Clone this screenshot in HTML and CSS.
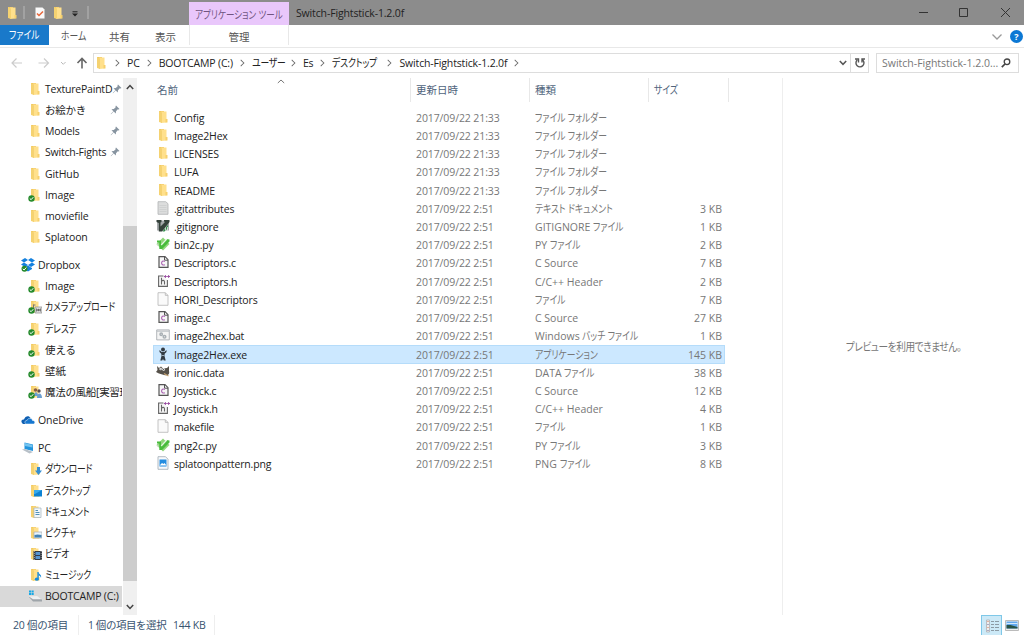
FILE: index.html
```
<!DOCTYPE html>
<html lang="ja">
<head>
    <meta charset="UTF-8">
    <title>Switch-Fightstick-1.2.0f</title>
    <link rel="stylesheet" href="styles.css">
</head>
<body>
    <!-- Icons -->
    <svg class="defs" width="0" height="0">
        <symbol id="folder" viewBox="0 0 14 14">
            <path d="M3 1h5v11H3z" fill="#f0c75e"/>
            <path d="M5 1.500h5.500v11L5 13z" fill="#ffe08c"/>
            <path d="M3 1l3 1.500V13l-3-1z" fill="#f5d271"/>
            <path d="M9.500 9h2v3.500h-2z" fill="#f7d06c"/>
        </symbol>
        <symbol id="check" viewBox="0 0 14 14">
            <circle cx="3.500" cy="10.500" r="3.200" fill="#258a2c"/>
            <path d="M1.800 10.500l1.300 1.200 2.200-2.500" fill="none" stroke="#fff" stroke-width="1"/>
        </symbol>
        <symbol id="synced" viewBox="0 0 14 14"><use href="#folder"/><use href="#check"/></symbol>
        <symbol id="camera" viewBox="0 0 14 14">
            <use href="#folder"/>
            <path d="M7 7h7v6H7z" fill="#e2e2e2" stroke="#888" stroke-width=".7"/>
            <path d="M5.500 4.500v5M5.500 5h2M8.500 8.500v3M12.500 8.500v3" fill="none" stroke="#777"/>
            <circle cx="10.500" cy="10" r="1.300" fill="#666"/>
            <use href="#check"/>
        </symbol>
        <symbol id="people" viewBox="0 0 14 14">
            <use href="#folder"/>
            <circle cx="7.500" cy="5" r="1.800" fill="#8b6048"/><circle cx="11" cy="6" r="1.700" fill="#5d4c48"/>
            <path d="M6 11c0-5 4-5 4 0zM9 13c0-6 5-6 5 0z" fill="#6c9fd1"/>
            <use href="#check"/>
        </symbol>
        <symbol id="dropbox" viewBox="0 0 14 14">
            <path d="M4 0l3 2-4 2.500L0 2.400zM10 0l4 2.400-3 2.100L7 2zM0 6.500l3-2 4 2.500-3 2zM14 6.500l-3-2L7 7l3 2zM3 10l1-.500L7 7.500l3 2 1 .500v1L7 13.500 3 11z" fill="#1481de"/>
            <circle cx="3.500" cy="10.800" r="3" fill="#258a2c"/>
            <path d="M1.800 10.800l1.300 1.200 2.200-2.500" fill="none" stroke="#fff"/>
        </symbol>
        <symbol id="onedrive" viewBox="0 0 14 14">
            <path d="M1 10c-1.500-2 0-4 2-3.500C4 3 8 2 9.500 5L5 11H2z" fill="#0f5fb2"/>
            <path d="M5 11c-2-1-1-4 1-3.500 1-3 5-3 5.500 0 2-.300 3.300 2 1.500 3.500z" fill="#1677cf" stroke="#fff" stroke-width=".5"/>
        </symbol>
        <symbol id="pc" viewBox="0 0 14 14">
            <path d="M3.500 1.500l8.500 2v6.500l-8.500-2z" fill="#2294dd"/>
            <path d="M4 2l7.500 2v2.500L4 5z" fill="#73c3ef"/>
            <path d="M1 8.500l3-.500 8 3-3.500 1.500z" fill="#b8c0c8"/>
        </symbol>
        <symbol id="download" viewBox="0 0 14 14"><use href="#folder"/><path d="M9 5h3v3.500h2L10.500 13 7 8.500h2z" fill="#368fd3"/></symbol>
        <symbol id="desktop" viewBox="0 0 14 14"><use href="#folder"/><path d="M6 6h8.500v6.500H6z" fill="#0c82d3"/><path d="M6 6h8L7 10H6z" fill="#36a9ed"/></symbol>
        <symbol id="document" viewBox="0 0 14 14"><use href="#folder"/><path d="M6 3h7v9.500H6z" fill="#f2f7fa" stroke="#a3b2bd" stroke-width=".7"/><path d="M7.500 5.500H10M7.500 7.500h4M7.500 9.500h4" stroke="#5191bb"/></symbol>
        <symbol id="picture" viewBox="0 0 14 14"><use href="#folder"/><path d="M6 6h8v6H6z" fill="#e9f5fd" stroke="#aaa" stroke-width=".7"/><path d="M6.500 9l3-.500 4 .500v2.500h-7z" fill="#4282b5"/></symbol>
        <symbol id="video" viewBox="0 0 14 14"><use href="#folder"/><path d="M5.500 4H14v9H5.500z" fill="#353a43"/><path d="M7.500 5H12v3H7.500zM7.500 9H12v3H7.500z" fill="#5794d0"/><path d="M6.400 4v9M13.200 4v9" stroke="#ddd" stroke-width=".6" stroke-dasharray="1 1"/></symbol>
        <symbol id="music" viewBox="0 0 14 14"><use href="#folder"/><path d="M10 4c.500 2 4 2.500 3 6-.300-2-1.500-2-2-2.500V11" fill="#168bdd"/><path d="M10 4v7" stroke="#168bdd" stroke-width="1.300"/><ellipse cx="8.800" cy="11.200" rx="2" ry="1.600" fill="#168bdd"/></symbol>
        <symbol id="drive" viewBox="0 0 14 14">
            <path d="M1 1.500h2v2H1zM3.500 1.500h2.200v2H3.500zM1 4h2v2H1zM3.500 4h2.200v2H3.500z" fill="#16a8e5"/>
            <path d="M1 8h9l4 2.500v2H5z" fill="#9fa5aa"/><path d="M1 7.500l8-.500 5 3.300H5z" fill="#eef0f1"/>
        </symbol>
        <symbol id="pin" viewBox="0 0 10 10"><path d="M6 .500L9.500 4l-1 .500-.700-.200L6 6.200 5.800 8.500 3.700 6.500 1 9.300.700 9l2.700-2.800L1.500 4.200l2.300-.200 1.900-1.800-.200-.900z" fill="#8794a0"/></symbol>
        <symbol id="text" viewBox="0 0 14 14"><path d="M2 .700h7.700l2.300 2v10.600H2z" fill="#dcdddd" stroke="#b0b2b4" stroke-width=".8"/><path d="M3.500 4.500h7M3.500 6.500h7M3.500 8.500h7M3.500 10.500h7" stroke="#c9cbcc" stroke-width=".7"/></symbol>
        <symbol id="blank" viewBox="0 0 14 14"><path d="M2 .700h7.300L12 3.400v9.900H2z" fill="#fafafa" stroke="#b5b5b5" stroke-width=".8"/><path d="M9.300.700v2.700H12" fill="none" stroke="#b5b5b5" stroke-width=".8"/></symbol>
        <symbol id="git" viewBox="0 0 14 14">
            <path d="M1 1.500h12v10H1z" fill="#a6aaac"/>
            <path d="M.500 1h5v2l-1 .500v4L9 3 8 2.500V1h5.500v2L6 12.500H2.800V4L.500 3z" fill="#34413a"/>
            <path d="M6.500 12.500L12 6v3l-3.500 3.500z" fill="#2e8e48"/><path d="M9.500 8.500v3M11.500 8v3.500" stroke="#e4e8e5" stroke-width=".8"/>
        </symbol>
        <symbol id="py" viewBox="0 0 14 14">
            <path d="M7 .500L13.500 7 7 13.500.500 7z" fill="#8fd779"/>
            <path d="M1 3.500h4v4L10.500 2l3 .500v2L6 12H3.300V5.500H1z" fill="#48bc3c"/>
            <path d="M5.200 8L10.800 2" stroke="#e5f6df" stroke-width="1.200"/><path d="M.500 7.500l2 2v-3z" fill="#c5d7c0"/>
        </symbol>
        <symbol id="c" viewBox="0 0 14 14">
            <path d="M3 1.700h6l3 3v7.600H3z" fill="#f6f6f6" stroke="#555" stroke-width="1.200"/><path d="M8.500 1.500v3.700H12" fill="none" stroke="#555"/>
            <path d="M8.900 6.400C6.800 5.400 5.600 6.600 5.600 8s1.300 2.600 3.300 1.700" fill="none" stroke="#a85fb0" stroke-width="1.100"/>
        </symbol>
        <symbol id="h" viewBox="0 0 14 14">
            <path d="M7.500 2H2.600v10.400h8.800V6" fill="#f6f6f6" stroke="#666" stroke-width="1.100"/>
            <path d="M5.500 3.800v6.700M5.500 7.300c1-1.500 3-1.200 3 .500v2.700" fill="none" stroke="#666" stroke-width="1.100"/>
            <path d="M8 2.500h2.800M9.400 1.100v2.800M11.200 2.500H14M12.600 1.100v2.800" stroke="#9a4fa2"/>
        </symbol>
        <symbol id="bat" viewBox="0 0 14 14">
            <path d="M.700 1.900h12.600v10H.700z" fill="#f4f4f4" stroke="#9fa5aa" stroke-width=".8"/><path d="M1 3.200h12" stroke="#b9bec2"/>
            <circle cx="5.200" cy="6.300" r="1.200" fill="none" stroke="#a9b0b5" stroke-width="1.500"/><circle cx="8.500" cy="8.800" r="1.300" fill="none" stroke="#a9b0b5" stroke-width="1.500"/>
        </symbol>
        <symbol id="exe" viewBox="0 0 14 14">
            <circle cx="7" cy="2.500" r="2" fill="#343c43"/><path d="M3.500 3l2.200 2h2.600l2.200-2v2L8.700 6.800 8.500 9l1.200 4.500H7.800L7 12l-.800 1.500H4.300L5.500 9l-.200-2.200L3.500 5z" fill="#343c43"/><path d="M5.500 8.500h3" stroke="#9cabb6"/>
        </symbol>
        <symbol id="gimp" viewBox="0 0 14 14">
            <path d="M1 1l2 2 2-1.500 2 2 4-.500 2-2v5c1 4-2 5-5 4L3 8.500 0 7l1.500-2z" fill="#555049"/>
            <circle cx="4.700" cy="4" r="1.300" fill="#fff"/><circle cx="7.600" cy="4.500" r="1.300" fill="#fff"/><circle cx="5" cy="4.100" r=".5"/><circle cx="7.700" cy="4.600" r=".5"/>
            <path d="M8 8.500l4.500 2.500" stroke="#c5a16f" stroke-width="1.200"/>
        </symbol>
        <symbol id="png" viewBox="0 0 14 14"><path d="M2 .700h7.500L12 3.200v10.100H2z" fill="#f8fafc" stroke="#9faab4" stroke-width=".8"/><path d="M3.500 3.500h7V10h-7z" fill="#258de0"/><path d="M3.500 9.500L6 7l1.500 1 1-1 2 2.500v.5h-7z" fill="#fff"/><path d="M3.500 9.500h7v1h-7z" fill="#258de0"/></symbol>
    </svg>

    <header class="titlebar">
        <div class="quick">
            <svg class="icon"><use href="#folder"/></svg>
            <i class="bar"></i>
            <svg class="prop" viewBox="0 0 10 12"><path d="M.5.500h7l2 2v9h-9z" fill="#fafafa"/><path d="M2 6.500l2 2 4-4" fill="none" stroke="#e8663a" stroke-width="1.500"/></svg>
            <svg class="icon new"><use href="#folder"/></svg>
            <svg class="more" viewBox="0 0 6 6"><path d="M.5.800h5" stroke="#222"/><path d="M0 2.500h6L3 5.500z" fill="#222"/></svg>
            <i class="bar"></i>
        </div>
        <div class="context"><span class="kana">アプリケーション ツール</span></div>
        <div class="caption">Switch-Fightstick-1.2.0f</div>
        <svg class="winbuttons" viewBox="0 0 92 10" fill="none" stroke="#333"><path d="M0 5.500h9M40.500 1.500h8v8h-8zM82 1l9 9M91 1l-9 9"/></svg>
    </header>

    <nav class="ribbon">
        <div class="tab file"><span class="kana">ファイル</span></div>
        <div class="tab home"><span class="kana">ホーム</span></div>
        <div class="tab share">共有</div>
        <div class="tab view">表示</div>
        <div class="tab manage">管理</div>
        <svg class="expand" viewBox="0 0 10 6"><path d="M.5.500L5 5 9.500.500" fill="none" stroke="#999" stroke-width="1.300"/></svg>
        <div class="help">?</div>
    </nav>

    <div class="addressbar">
        <svg class="arrows" viewBox="0 0 78 12" fill="none">
            <path d="M5.500 1.500L1 6l4.500 4.500M1 6h10M33 1.500L37.500 6 33 10.500M37.500 6h-10" stroke="#ccc" stroke-width="1.200"/>
            <path d="M50 5l2.300 2.300L54.600 5" stroke="#bbb"/>
            <path d="M66.500 6L71 1.500 75.500 6M71 2v9.500" stroke="#666" stroke-width="1.600"/>
        </svg>
        <div class="path">
            <svg class="icon"><use href="#folder"/></svg>
            <div class="crumbs">
                <b></b>
                <span>PC</span><span>BOOTCAMP (C:)</span><span class="user"><em class="kana">ユーザー</em></span><span>Es</span><span class="desk"><em class="kana">デスクトップ</em></span><span>Switch-Fightstick-1.2.0f</span>
            </div>
            <svg class="drop" viewBox="0 0 8 6"><path d="M.8 1L4 4.300 7.200 1" fill="none" stroke="#555" stroke-width="1.500"/></svg>
            <div class="refresh"><svg viewBox="0 0 12 12" fill="none" stroke="#555" stroke-width="1.400"><path d="M3.200 3A4 4 0 1 0 8.500 2.800M1 2h3.500v3.500M8 5.500V2h3"/></svg></div>
        </div>
        <div class="search"><span>Switch-Fightstick-1.2.0...</span><svg viewBox="0 0 10 10" fill="none" stroke="#444"><circle cx="6" cy="3.800" r="2.800" stroke-width="1.300"/><path d="M4 6L.8 9.200" stroke-width="1.700"/></svg></div>
    </div>

    <main>
        <aside id="tree"></aside>
        <div class="scroll">
            <svg viewBox="0 0 8 6"><path d="M.8 5L4 1.500 7.200 5" fill="none" stroke="#444" stroke-width="1.500"/></svg>
            <div class="thumb"></div>
            <svg viewBox="0 0 8 6"><path d="M.8 1L4 4.500 7.200 1" fill="none" stroke="#444" stroke-width="1.500"/></svg>
        </div>
        <section class="files">
            <div class="head">
                <div>名前<svg class="sort" viewBox="0 0 8 5"><path d="M.8 4L4 1l3.200 3" fill="none" stroke="#777"/></svg></div>
                <div>更新日時</div>
                <div>種類</div>
                <div><span class="kana">サイズ</span></div>
            </div>
            <div id="rows"></div>
        </section>
        <section class="preview"><span>プレビューを利用できません。</span></section>
    </main>

    <footer>
        <span class="count">20 個の項目</span>
        <span class="selected">1 個の項目を選択</span>
        <span class="bytes">144 KB</span>
        <div class="details"><svg viewBox="0 0 14 14"><path d="M1.500 1h3v12h-3z" fill="#eee" stroke="#aaa" stroke-width=".7"/><path d="M3 2v1M3 8v1" stroke="#d87755"/><path d="M3 5v1M3 11v1" stroke="#669"/><path d="M6 2.500h3M10 2.500h4M6 5.500h3M10 5.500h4M6 8.500h3M10 8.500h4M6 11.500h3M10 11.500h4" stroke="#8c9ba5"/></svg></div>
        <svg class="large" viewBox="0 0 14 11"><path d="M.5.500h13v10H.5z" fill="#eee" stroke="#bbb"/><path d="M1.500 1.500h11v7h-11z" fill="#62a8ef"/><path d="M1.500 5h4l7 2v1.500h-11z" fill="#285346"/><path d="M1.500 3.500h11" stroke="#d3e9fb"/></svg>
    </footer>

    <script>
        // icon, name, level, class
        var tree = [
            ["folder", "TexturePaintD", 1, "pinned"],
            ["folder", "お絵かき", 1, "pinned"],
            ["folder", "Models", 1, "pinned"],
            ["folder", "Switch-Fights", 1, "pinned"],
            ["folder", "GitHub", 1, ""],
            ["synced", "Image", 1, ""],
            ["folder", "moviefile", 1, ""],
            ["folder", "Splatoon", 1, ""],
            ["dropbox", "Dropbox", 0, ""],
            ["synced", "Image", 1, ""],
            ["camera", "カメラアップロード", 1, ""],
            ["synced", "デレステ", 1, ""],
            ["synced", "使える", 1, ""],
            ["synced", "壁紙", 1, ""],
            ["people", "魔法の風船[実習班", 1, "long"],
            ["onedrive", "OneDrive", 0, ""],
            ["pc", "PC", 0, ""],
            ["download", "ダウンロード", 1, ""],
            ["desktop", "デスクトップ", 1, ""],
            ["document", "ドキュメント", 1, ""],
            ["picture", "ピクチャ", 1, ""],
            ["video", "ビデオ", 1, ""],
            ["music", "ミュージック", 1, ""],
            ["drive", "BOOTCAMP (C:)", 1, "current"]
        ];

        var files = [
            ["folder", "Config", "21:33", "ファイル フォルダー", ""],
            ["folder", "Image2Hex", "21:33", "ファイル フォルダー", ""],
            ["folder", "LICENSES", "21:33", "ファイル フォルダー", ""],
            ["folder", "LUFA", "21:33", "ファイル フォルダー", ""],
            ["folder", "README", "21:33", "ファイル フォルダー", ""],
            ["text", ".gitattributes", "2:51", "テキスト ドキュメント", "3 KB"],
            ["git", ".gitignore", "2:51", "GITIGNORE ファイル", "1 KB"],
            ["py", "bin2c.py", "2:51", "PY ファイル", "2 KB"],
            ["c", "Descriptors.c", "2:51", "C Source", "7 KB"],
            ["h", "Descriptors.h", "2:51", "C/C++ Header", "2 KB"],
            ["blank", "HORI_Descriptors", "2:51", "ファイル", "7 KB"],
            ["c", "image.c", "2:51", "C Source", "27 KB"],
            ["bat", "image2hex.bat", "2:51", "Windows バッチ ファイル", "1 KB"],
            ["exe", "Image2Hex.exe", "2:51", "アプリケーション", "145 KB"],
            ["gimp", "ironic.data", "2:51", "DATA ファイル", "38 KB"],
            ["c", "Joystick.c", "2:51", "C Source", "12 KB"],
            ["h", "Joystick.h", "2:51", "C/C++ Header", "4 KB"],
            ["blank", "makefile", "2:51", "ファイル", "1 KB"],
            ["py", "png2c.py", "2:51", "PY ファイル", "3 KB"],
            ["png", "splatoonpattern.png", "2:51", "PNG ファイル", "8 KB"]
        ];

        function icon(name) {
            return '<svg class="icon"><use href="#' + name + '"/></svg>';
        }

        // katakana is set condensed
        function kana(text) {
            return text.replace(/[ァ-ー][ァ-ー ]*/g, '<span class="kana">$&</span>');
        }

        document.getElementById("tree").innerHTML = tree.map(function (t) {
            return '<div class="node level' + t[2] + ' ' + t[3] + '">' + icon(t[0]) +
                '<span class="label">' + kana(t[1]) + '</span>' +
                (t[3] == "pinned" ? '<svg class="pin"><use href="#pin"/></svg>' : '') + '</div>';
        }).join("");

        document.getElementById("rows").innerHTML = files.map(function (f) {
            return '<div class="row' + (f[1] == "Image2Hex.exe" ? ' active' : '') + '">' +
                '<div class="name">' + icon(f[0]) + '<span>' + f[1] + '</span></div>' +
                '<div class="date">2017/09/22 ' + f[2] + '</div><div>' + kana(f[3]) + '</div>' +
                '<div class="size">' + f[4] + '</div></div>';
        }).join("");
    </script>
</body>
</html>
```
FILE: styles.css
```
* {
    box-sizing: border-box;
}

body {
    margin: 0;
    height: 635px;
    overflow: hidden;
    display: flex;
    flex-direction: column;
    background: #fff;
    color: #222;
    font-family: "Open Sans", "Noto Sans CJK JP", sans-serif;
    font-size: 10.5px;
    line-height: 16px;
    white-space: nowrap;
}

svg {
    display: block;
    flex: none;
}

.defs {
    position: absolute;
}

.icon {
    width: 14px;
    height: 14px;
}

.kana {
    display: inline-block;
    font-size: 11px;
    font-style: normal;
    font-feature-settings: "palt";
    transform: scaleX(0.8);
    transform-origin: left;
    white-space: pre;
}

/* Title bar */
.titlebar {
    display: flex;
    height: 25px;
    background: #8c8c8c;
}

.quick {
    width: 189px;
    display: flex;
    align-items: center;
    padding-left: 5px;
}

.bar {
    width: 2px;
    height: 13px;
    margin-left: 4px;
    border: 1px solid #a2a2a2;
}

.prop {
    width: 10px;
    height: 12px;
    margin-left: 10px;
}

.new {
    margin-left: 6px;
}

.more {
    width: 6px;
    height: 6px;
    margin: 2px 5px 0 7px;
}

.context {
    width: 100px;
    margin-top: 2px;
    padding: 5px 0 0 6px;
    background: #e9c7fb;
    color: #70557f;
}

.context .kana {
    transform: scaleX(0.78);
}

.caption {
    flex: 1;
    padding: 5px 0 0 7px;
    letter-spacing: -0.14px;
}

.winbuttons {
    width: 92px;
    height: 10px;
    margin: 7px 13px 0 0;
}

/* Ribbon tabs */
.ribbon {
    display: flex;
    height: 23px;
    border-bottom: 1px solid #e8e8e8;
    color: #555;
}

.tab {
    height: 20px;
    padding-top: 4px;
}

.file {
    width: 49px;
    padding: 2px 0 0 9px;
    background: #1979ca;
    color: #fff;
}

.home {
    width: 60px;
    padding: 3px 0 0 12px;
}

.share {
    width: 46px;
}

.view {
    width: 34px;
}

.manage {
    width: 100px;
    border: solid #e8e8e8;
    border-width: 0 1px;
    text-align: center;
}

.expand {
    width: 10px;
    height: 6px;
    margin: 9px 8px 0 auto;
}

.help {
    width: 13px;
    height: 13px;
    margin: 5px 1px 0 0;
    border-radius: 50%;
    background: #0c78d4;
    color: #fff;
    font-weight: bold;
    font-size: 9px;
    line-height: 13px;
    text-align: center;
}

/* Address bar */
.addressbar {
    display: flex;
    height: 30px;
    padding: 5px 5px 5px 11px;
}

.arrows {
    width: 78px;
    height: 12px;
    margin: 4px 4px 0 0;
}

.path {
    display: flex;
    align-items: center;
    width: 776px;
    border: 1px solid #ddd;
}

.crumbs {
    flex: 1;
    display: flex;
    letter-spacing: -0.15px;
}

.crumbs b {
    width: 19px;
}

.crumbs b,
.crumbs span {
    position: relative;
}

.crumbs span {
    padding-right: 19px;
}

.crumbs b::after,
.crumbs span::after {
    content: "";
    position: absolute;
    right: 8px;
    top: 5px;
    width: 5px;
    height: 5px;
    border: solid #666;
    border-width: 1.500px 1.500px 0 0;
    transform: rotate(45deg) scale(0.8);
}

.crumbs .user {
    width: 51px;
}

.crumbs .desk {
    width: 67px;
}

.drop {
    width: 8px;
    height: 6px;
    margin-right: 3px;
}

.refresh {
    display: flex;
    align-items: center;
    width: 18px;
    height: 18px;
    padding-left: 3px;
    border-left: 1px solid #ddd;
}

.refresh svg {
    width: 12px;
    height: 12px;
}

.search {
    display: flex;
    align-items: center;
    justify-content: space-between;
    width: 143px;
    margin-left: 7px;
    padding: 0 7px 0 5px;
    border: 1px solid #ddd;
    color: #777;
}

.search svg {
    width: 10px;
    height: 10px;
}

/* Main area */
main {
    display: flex;
    height: 537px;
}

#tree {
    width: 123px;
    padding-top: 0.5px;
    overflow: hidden;
}

.node {
    display: flex;
    align-items: center;
    width: 122px;
    height: 21.15px;
    padding-left: 28px;
    letter-spacing: -0.1px;
}

.level0 {
    margin-top: 7px;
    padding-left: 21px;
}

.label {
    margin-left: 3px;
    flex: 1;
}

.pinned .label {
    letter-spacing: -0.22px;
}

.long .label {
    overflow: hidden;
    letter-spacing: -0.3px;
}

.pin {
    width: 10px;
    height: 10px;
    margin-right: 2px;
}

.current {
    background: #d9d9d9;
    letter-spacing: -0.2px;
}

.scroll {
    display: flex;
    flex-direction: column;
    align-items: center;
    justify-content: space-between;
    width: 14px;
    padding: 6px 0 5px;
    background: #f0f0f0;
}

.scroll svg {
    width: 8px;
    height: 6px;
}

.thumb {
    width: 14px;
    height: 355px;
    margin-top: 113px;
    background: #cdcdcd;
}

.files {
    width: 645px;
    padding-left: 16px;
}

.head,
.row {
    display: grid;
    grid-template-columns: 258px 119px 119px 80px;
}

.head {
    color: #50647c;
}

.head div {
    position: relative;
    height: 24px;
    padding: 4px 0 0 5px;
    border-right: 1px solid #e8e8e8;
}

.head div:first-child {
    padding-left: 4px;
}

.sort {
    position: absolute;
    left: 124px;
    top: 1px;
    width: 8px;
    height: 5px;
}

#rows {
    padding-top: 6.600px;
}

.row {
    width: 572px;
    height: 18.220px;
    align-items: center;
    color: #777;
}

.row > div {
    padding-left: 5px;
}

.row > .name {
    display: flex;
    align-items: center;
    gap: 4px;
    padding-left: 3px;
    color: #222;
    letter-spacing: -0.17px;
}

.name .icon {
    margin-top: -2px;
}

.row > .date {
    letter-spacing: -0.1px;
}

.row > .size {
    width: 73px;
    padding: 0;
    text-align: right;
}

.active {
    background: #cce8ff;
    box-shadow: inset 0 0 0 1px #b5dcfa;
}

.preview {
    flex: 1;
    display: flex;
    align-items: center;
    justify-content: center;
    border-left: 1px solid #eee;
    color: #777;
}

.preview span {
    font-size: 11px;
    font-feature-settings: "palt";
    transform: scaleX(0.88);
    letter-spacing: -0.5px;
}

/* Status bar */
footer {
    display: flex;
    height: 20px;
    padding-left: 13px;
    line-height: 21px;
    color: #38536f;
    letter-spacing: -0.25px;
}

.count {
    width: 66px;
    border-right: 1px solid #eee;
}

.selected {
    width: 94px;
    padding-left: 9px;
    letter-spacing: -0.45px;
}

.bytes {
    width: 42px;
    border-right: 1px solid #eee;
}

.details {
    width: 21px;
    height: 21px;
    margin-left: auto;
    padding: 3px;
    border: 1px solid #7fc8e8;
    background: #cce9f7;
}

.details svg {
    width: 14px;
    height: 14px;
}

.large {
    width: 14px;
    height: 11px;
    margin: 5px 5px 0 3px;
}
```
